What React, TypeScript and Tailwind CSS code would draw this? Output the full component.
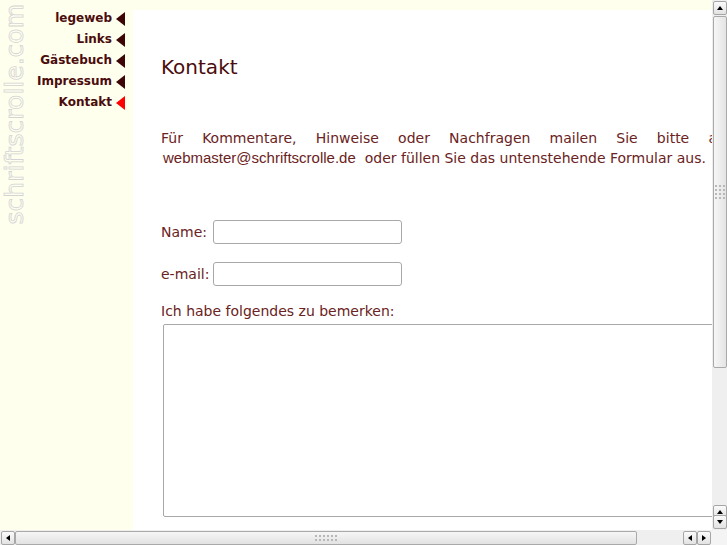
import React from "react";

const navItems = [
  { label: "legeweb", active: false },
  { label: "Links", active: false },
  { label: "Gästebuch", active: false },
  { label: "Impressum", active: false },
  { label: "Kontakt", active: true },
];

function Grip({ vertical }: { vertical: boolean }) {
  const dots = Array.from({ length: 12 });
  return (
    <div
      className={
        vertical
          ? "grid grid-cols-3 gap-[2px]"
          : "grid grid-cols-6 gap-[2px]"
      }
    >
      {dots.map((_, i) => (
        <div key={i} className="w-[2px] h-[2px] bg-[#b8b8b8]" />
      ))}
    </div>
  );
}

function ArrowBtn({ dir, className = "" }: { dir: "up" | "down" | "left" | "right"; className?: string }) {
  const tri =
    dir === "up"
      ? "border-x-[3px] border-x-transparent border-b-[4px] border-b-black"
      : dir === "down"
      ? "border-x-[3px] border-x-transparent border-t-[4px] border-t-black"
      : dir === "left"
      ? "border-y-[3px] border-y-transparent border-r-[4px] border-r-black"
      : "border-y-[3px] border-y-transparent border-l-[4px] border-l-black";
  return (
    <div
      className={
        "w-[14px] h-[14px] flex items-center justify-center border border-[#a6a6a6] rounded-[2px] bg-gradient-to-b from-[#fbfbfb] to-[#e2e2e2] " +
        className
      }
    >
      <div className={"w-0 h-0 " + tri} />
    </div>
  );
}

export default function App() {
  return (
    <div className="w-[727px] h-[545px] overflow-hidden bg-[#ffffee] font-['DejaVu_Sans',sans-serif] flex flex-col">
      <div className="flex h-[530px] shrink-0">
        {/* Sidebar */}
        <div className="w-[133px] shrink-0 flex">
          <div className="w-[32px] shrink-0 flex justify-start pl-[3px] pt-[4px]">
            <div className="[writing-mode:vertical-rl] rotate-180 text-[25px] leading-[24px] text-[#ffffee] [-webkit-text-stroke:0.8px_#d4d4d4] self-start">
              schriftscrolle.com
            </div>
          </div>
          <nav className="flex-1 flex flex-col items-end pt-[8px] pr-[8px]">
            {navItems.map((it) => (
              <div key={it.label} className="h-[21px] flex items-center">
                <span className="text-[12px] font-bold text-[#4a0c0c] leading-[21px]">{it.label}</span>
                <span
                  className={
                    "ml-[4px] w-0 h-0 border-y-[7px] border-y-transparent border-r-[9px] " +
                    (it.active ? "border-r-[#ff0000]" : "border-r-[#3d0505]")
                  }
                />
              </div>
            ))}
          </nav>
        </div>

        {/* Main */}
        <div className="flex-1 mt-[10px] bg-white overflow-hidden pl-[28px] text-[#6a2222]">
          <h1 className="mt-[45px] text-[20px] leading-[24px] font-normal text-[#4a0c0c]">Kontakt</h1>

          <div className="mt-[49px] text-[14px] leading-[20px] w-[565px]">
            <div className="flex justify-between">
              <span>Für</span>
              <span>Kommentare,</span>
              <span>Hinweise</span>
              <span>oder</span>
              <span>Nachfragen</span>
              <span>mailen</span>
              <span>Sie</span>
              <span>bitte</span>
              <span>an</span>
            </div>
            <div className="whitespace-nowrap">
              <span className="ml-[2px] font-['Liberation_Sans',Arial,sans-serif] text-[15px]">webmaster@schriftscrolle.de</span>
              <span> &nbsp;oder füllen Sie das untenstehende Formular aus.</span>
            </div>
          </div>

          <div className="mt-[52px] flex items-center text-[14px]">
            <span className="w-[52px]">Name:</span>
            <input className="w-[189px] h-[24px] border border-[#a8a8a8] rounded-[3px] bg-white" />
          </div>
          <div className="mt-[18px] flex items-center text-[14px]">
            <span className="w-[52px]">e-mail:</span>
            <input className="w-[189px] h-[24px] border border-[#a8a8a8] rounded-[3px] bg-white" />
          </div>
          <div className="mt-[15px] text-[14px] leading-[20px]">Ich habe folgendes zu bemerken:</div>
          <textarea className="block mt-[3px] ml-[2px] w-[600px] h-[193px] border border-[#a8a8a8] rounded-[2px] bg-white resize-none" />
        </div>

        {/* Vertical scrollbar */}
        <div className="w-[15px] shrink-0 bg-[#efefef] flex flex-col items-center pt-[1px] pb-[1px]">
          <ArrowBtn dir="up" />
          <div className="mt-[1px] w-[14px] h-[352px] border border-[#a9a9a9] rounded-[2px] bg-gradient-to-r from-[#f6f6f6] to-[#e4e4e4] flex items-center justify-center">
            <Grip vertical />
          </div>
          <div className="flex-1" />
          <ArrowBtn dir="up" />
          <ArrowBtn dir="down" className="mt-[-4px]" />
        </div>
      </div>

      {/* Horizontal scrollbar */}
      <div className="h-[15px] flex items-center bg-[#efefef]">
        <ArrowBtn dir="left" className="ml-[1px]" />
        <div className="w-[622px] h-[14px] border border-[#a9a9a9] rounded-[2px] bg-gradient-to-b from-[#f6f6f6] to-[#e2e2e2] flex items-center justify-center">
          <Grip vertical={false} />
        </div>
        <div className="flex-1" />
        <ArrowBtn dir="left" />
        <ArrowBtn dir="right" />
        <div className="w-[16px] h-[15px] bg-[#f4f4f4]" />
      </div>
    </div>
  );
}
